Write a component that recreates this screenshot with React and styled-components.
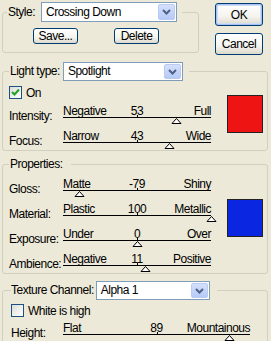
import styled, { createGlobalStyle } from "styled-components";

const Global = createGlobalStyle`
  html, body { margin: 0; padding: 0; background: #ece9d8; }
  body {
    font-family: "Liberation Sans", Arial, sans-serif;
    font-size: 12px;
    letter-spacing: -0.5px;
    color: #000;
  }
`;

const Dialog = styled.div`
  width: 271px;
  height: 341px;
  box-sizing: border-box;
  overflow: hidden;
  padding: 2px 0 0 2px;
  display: flex;
  flex-direction: column;
`;

const TopRow = styled.div`
  display: flex;
  align-items: flex-start;
`;

const Group = styled.fieldset`
  box-sizing: border-box;
  width: ${(p) => p.$w}px;
  min-width: 0;
  margin: ${(p) => p.$mt || 0}px 0 0 0;
  padding: 0 0 ${(p) => p.$pb || 0}px ${(p) => p.$pl}px;
  border: 1px solid #d0d0bf;
  border-radius: 3px;
`;

const Legend = styled.legend`
  display: flex;
  align-items: center;
  gap: ${(p) => p.$gap || 6}px;
  padding: 0 ${(p) => p.$pr || 6}px 0 ${(p) => p.$plg || 0}px;
  line-height: 15px;
`;

const Select = styled.div`
  box-sizing: border-box;
  width: ${(p) => p.$w}px;
  height: ${(p) => p.$h || 19}px;
  border: 1px solid #7f9db9;
  background: #fff;
  display: flex;
  align-items: stretch;
  padding: 1px;
`;

const SelectText = styled.span`
  flex: 1;
  padding-left: 3px;
  display: flex;
  align-items: center;
`;

const Arrow = styled.span`
  width: 15px;
  border: 1px solid #b9cbf3;
  border-radius: 2px;
  background: linear-gradient(#d4e0fc, #b6c9f7);
  display: flex;
  align-items: center;
  justify-content: center;
`;

const StyleButtons = styled.div`
  display: flex;
  gap: 36px;
  margin: 6px 0 0 26px;
`;

const Button = styled.button`
  box-sizing: border-box;
  width: ${(p) => p.$w}px;
  height: ${(p) => p.$h}px;
  padding: 0;
  font: inherit;
  letter-spacing: inherit;
  color: #000;
  border: 1px solid #003c74;
  border-radius: 3px;
  background: linear-gradient(#ffffff 0%, #f4f3ee 60%, #dcd8cc 100%);
  box-shadow: ${(p) => (p.$default ? "inset 0 0 0 1px #a8c1f0, inset 0 0 0 2px #cddcf8" : "none")};
  line-height: 1;
`;

const ButtonColumn = styled.div`
  display: flex;
  flex-direction: column;
  gap: 7px;
  margin: 1px 0 0 16px;
`;

const Content = styled.div`
  display: flex;
  align-items: flex-start;
`;

const Column = styled.div`
  display: flex;
  flex-direction: column;
`;

const CheckRow = styled.label`
  display: flex;
  align-items: center;
  gap: 4px;
  height: 13px;
  margin-top: ${(p) => p.$mt}px;
`;

const Box = styled.span`
  box-sizing: border-box;
  width: 13px;
  height: 13px;
  border: 1px solid #1c5180;
  background: linear-gradient(135deg, #dcdcd7, #ffffff);
  display: flex;
  align-items: center;
  justify-content: center;
`;

const SliderRow = styled.div`
  display: flex;
  height: 20px;
  margin-top: ${(p) => p.$mt}px;
`;

const RowLabel = styled.span`
  width: ${(p) => p.$w}px;
  padding-top: 5px;
  line-height: 13px;
  white-space: nowrap;
`;

const Track = styled.div`
  position: relative;
  width: ${(p) => p.$w}px;
`;

const Scale = styled.div`
  display: grid;
  grid-template-columns: 1fr auto 1fr;
  height: 12px;
  line-height: 12px;
  border-bottom: 1px solid #000;
  white-space: nowrap;
  span:first-child { text-align: left; }
  span:last-child { text-align: right; }
`;

const Tick = styled.span`
  position: absolute;
  left: 50%;
  top: 10px;
  width: 1px;
  height: 2px;
  background: #000;
`;

const Thumb = styled.svg`
  position: absolute;
  top: 13px;
  margin-left: -5px;
`;

const Swatch = styled.div`
  box-sizing: border-box;
  width: 36px;
  height: 38px;
  border: 1px solid #222;
  background: ${(p) => p.$c};
  margin: ${(p) => p.$mt}px 4px 0 auto;
`;

const Chevron = () => (
  <svg width="9" height="6" viewBox="0 0 9 6">
    <path d="M1 1 L4.5 4.5 L8 1" fill="none" stroke="#4d6185" strokeWidth="2" />
  </svg>
);

const Dropdown = ({ w, h, children }) => (
  <Select $w={w} $h={h}>
    <SelectText>{children}</SelectText>
    <Arrow>
      <Chevron />
    </Arrow>
  </Select>
);

const Check = ({ on, mt, children }) => (
  <CheckRow $mt={mt}>
    <Box>
      {on && (
        <svg width="9" height="9" viewBox="0 0 9 9">
          <path d="M1 4 L3.5 6.5 L8 1.5" fill="none" stroke="#21a121" strokeWidth="2" />
        </svg>
      )}
    </Box>
    {children}
  </CheckRow>
);

const Slider = ({ label, lw = 54, w = 148, min, value, max, pos, mt }) => (
  <SliderRow $mt={mt}>
    <RowLabel $w={lw}>{label}</RowLabel>
    <Track $w={w}>
      <Scale>
        <span>{min}</span>
        <span>{value}</span>
        <span>{max}</span>
      </Scale>
      <Tick />
      <Thumb width="11" height="6" viewBox="0 0 11 6" style={{ left: pos * w }}>
        <path d="M5.5 0.5 L10 5.5 L1 5.5 Z" fill="#fff" stroke="#000" strokeWidth="1" />
      </Thumb>
    </Track>
  </SliderRow>
);

const App = () => (
  <>
    <Global />
    <Dialog>
      <TopRow>
        <Group $w={197} $pl={4} $pb={8}>
          <Legend $pr={5} $plg={1}>
            Style:
            <Dropdown w={136} h={20}>Crossing Down</Dropdown>
          </Legend>
          <StyleButtons>
            <Button $w={45} $h={16}>Save...</Button>
            <Button $w={45} $h={16}>Delete</Button>
          </StyleButtons>
        </Group>
        <ButtonColumn>
          <Button $w={48} $h={23} $default>OK</Button>
          <Button $w={48} $h={22}>Cancel</Button>
        </ButtonColumn>
      </TopRow>

      <Group $w={266} $pl={6} $mt={7}>
        <Legend $plg={1} $gap={3}>
          Light type:
          <Dropdown w={120}>Spotlight</Dropdown>
        </Legend>
        <Content>
          <Column>
            <Check on mt={5}>On</Check>
            <Slider label="Intensity:" min="Negative" value="53" max="Full" pos={0.765} mt={6} />
            <Slider label="Focus:" min="Narrow" value="43" max="Wide" pos={0.715} mt={5} />
          </Column>
          <Swatch $c="#ee1414" $mt={14} />
        </Content>
      </Group>

      <Group $w={266} $pl={6} $mt={6}>
        <Legend $plg={1} $pr={8}>Properties:</Legend>
        <Content>
          <Column>
            <Slider label="Gloss:" min="Matte" value="-79" max="Shiny" pos={0.105} mt={6} />
            <Slider label="Material:" min="Plastic" value="100" max="Metallic" pos={1} mt={5} />
            <Slider label="Exposure:" min="Under" value="0" max="Over" pos={0.5} mt={5} />
            <Slider label="Ambience:" min="Negative" value="11" max="Positive" pos={0.555} mt={5} />
          </Column>
          <Swatch $c="#0a26e0" $mt={27} />
        </Content>
      </Group>

      <Group $w={266} $pl={8} $mt={7} $pb={20}>
        <Legend $plg={0} $gap={2} $pr={7}>
          Texture Channel:
          <Dropdown w={114}>Alpha 1</Dropdown>
        </Legend>
        <Check mt={4}>White is high</Check>
        <Slider label="Height:" lw={52} w={187} min="Flat" value="89" max="Mountainous" pos={0.89} mt={5} />
      </Group>
    </Dialog>
  </>
);

export default App;
